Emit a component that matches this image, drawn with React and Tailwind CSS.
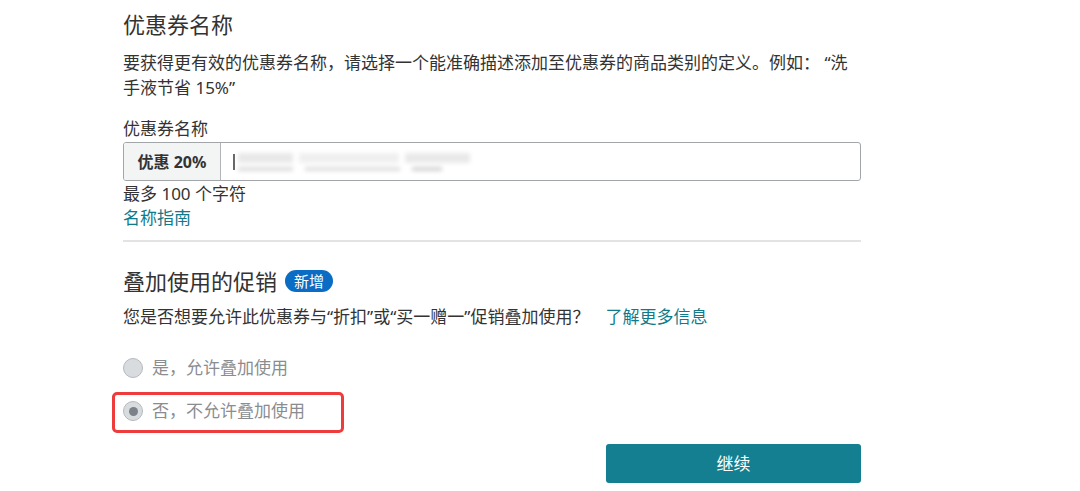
import React from "react";

const FONT = {
  fontFamily: '"Noto Sans", "Noto Sans CJK SC", sans-serif',
};

function Radio({ checked }) {
  return (
    <span className="flex h-[20px] w-[20px] items-center justify-center rounded-full border border-[#b5b9be] bg-[#d9dcdf]">
      {checked && <span className="h-[9px] w-[9px] rounded-full bg-[#7b8188]" />}
    </span>
  );
}

export default function App() {
  return (
    <div className="min-h-[491px] w-[1080px] bg-white text-[#333]" style={FONT}>
      <div className="ml-[123px] flex w-[738px] flex-col pt-[8px]">
        {/* Coupon name */}
        <h1 className="text-[22px] leading-[32px] font-normal text-[#333]">
          优惠券名称
        </h1>
        <p className="mt-[10px] text-[17px] leading-[25px] text-[#333]">
          要获得更有效的优惠券名称，请选择一个能准确描述添加至优惠券的商品类别的定义。例如： “洗手液节省 15%”
        </p>

        <label className="mt-[18px] text-[17px] leading-[22px]">优惠券名称</label>
        <div className="mt-[2px] flex h-[39px] overflow-hidden rounded-[3px] border border-[#a3a6a9]">
          <div className="flex w-[97px] items-center justify-center border-r border-[#b3b6b9] bg-[#f3f4f4] text-[16px] font-bold text-[#333]">
            优惠 20%
          </div>
          <div className="relative flex flex-1 items-center pl-[12px]">
            <span className="h-[16px] w-[2px] bg-[#666]" />
            {/* redacted value */}
            <div className="ml-[3px] flex flex-col gap-[4px] blur-[2px]">
              <div className="flex gap-[6px]">
                <span className="h-[10px] w-[55px] bg-[#e8e8e8]" />
                <span className="h-[10px] w-[100px] bg-[#efefef]" />
                <span className="h-[10px] w-[65px] bg-[#e9e9e9]" />
              </div>
              <div className="flex gap-[12px]">
                <span className="h-[4px] w-[55px] bg-[#dcdcdc]" />
                <span className="h-[4px] w-[95px] bg-[#dedede]" />
                <span className="h-[4px] w-[30px] bg-[#d3d3d3]" />
              </div>
            </div>
          </div>
        </div>
        <p className="text-[17px] leading-[24px] mt-[1px]">最多 100 个字符</p>
        <a className="text-[17px] leading-[24px] text-[#0f7a8a]">名称指南</a>

        <div className="mt-[10px] h-[2px] bg-[#e2e3e4]" />

        {/* Stacking */}
        <h2 className="mt-[24px] flex items-center gap-[8px] text-[22px] leading-[30px] font-normal">
          叠加使用的促销
          <span className="rounded-full bg-[#0b6cc4] px-[9px] text-[15px] leading-[22px] text-white">
            新增
          </span>
        </h2>
        <p className="mt-[9px] text-[17px] leading-[24px]">
          您是否想要允许此优惠券与“折扣”或“买一赠一”促销叠加使用？
          <a className="ml-[16px] text-[#0f7a8a]">了解更多信息</a>
        </p>

        <div className="mt-[27px] flex h-[24px] items-center gap-[9px] text-[17px] text-[#8a8d90]">
          <Radio />
          是，允许叠加使用
        </div>
        <div className="mt-[12px] -ml-[11px] flex w-[232px] items-center gap-[9px] rounded-[5px] border-[3px] border-[#ee3b3b] pt-[4px] pb-[7px] pl-[8px] text-[17px] leading-[24px] text-[#8a8d90]">
          <Radio checked />
          否，不允许叠加使用
        </div>

        <button className="mt-[11px] h-[39px] w-[255px] self-end rounded-[3px] bg-[#137f91] text-[17px] text-white">
          继续
        </button>
      </div>
    </div>
  );
}
